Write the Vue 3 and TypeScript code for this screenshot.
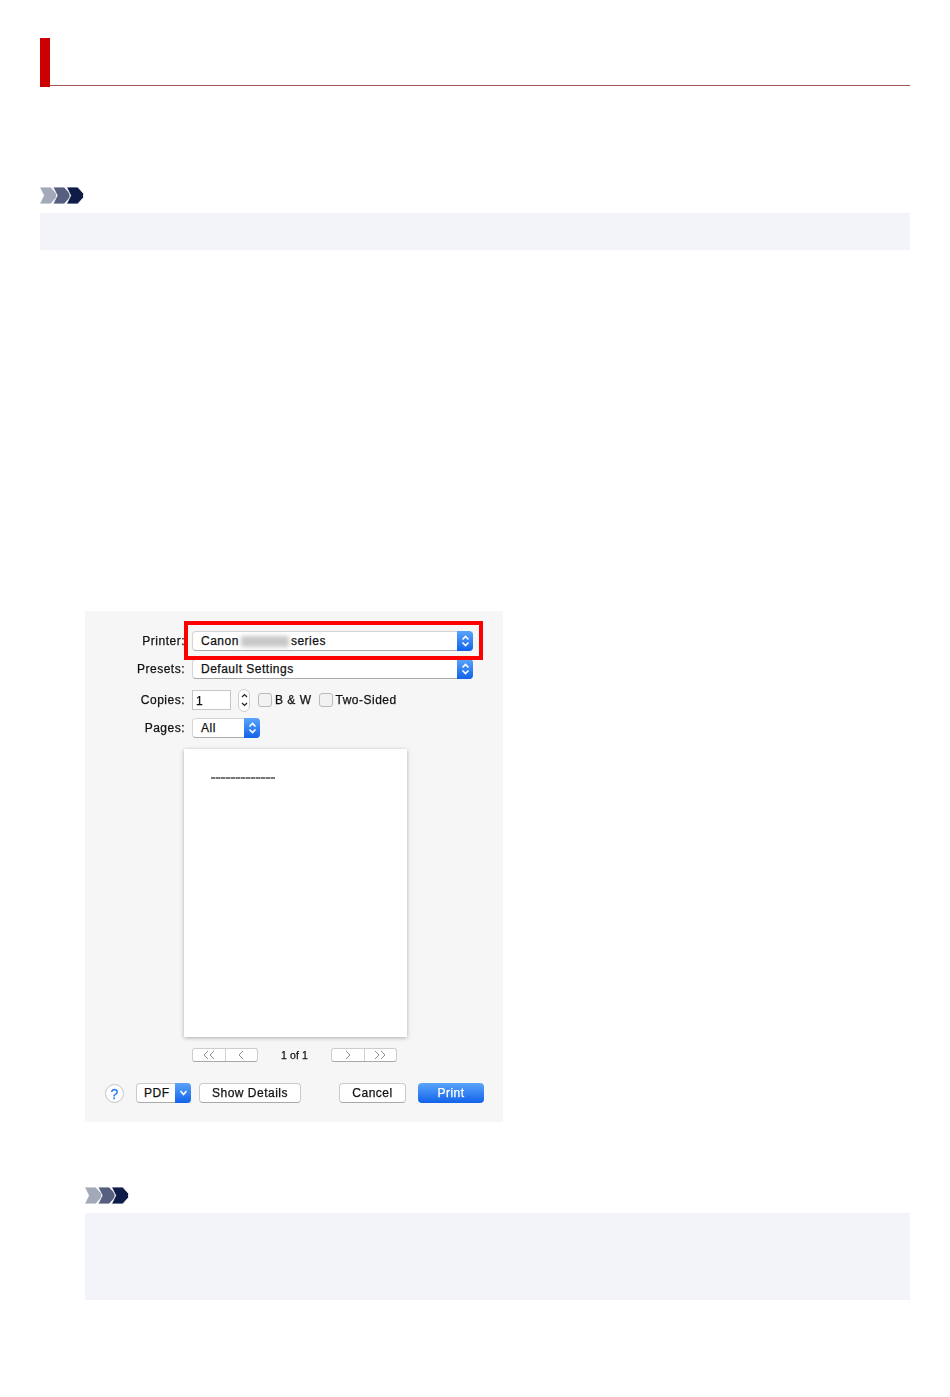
<script setup lang="ts">
const chevrons = ['#a3a9b8', '#565f7f', '#0f1c47']
const chevronPath = (i: number): string =>
  `M${i * 13.5 - 0.5} 0h11.2l5.8 6.4v4.2l-5.8 6.4h-11.2l4.2 -8.5z`
</script>

<template>
  <div class="page">
    <header class="head">
      <div class="head-mark"></div>
      <div class="head-line"></div>
    </header>

    <section class="note note-top">
      <svg class="note-icon" width="44" height="17" viewBox="0 0 44 17">
        <path v-for="(c, i) in chevrons" :key="c" :fill="c" stroke="#fff" stroke-width="0.8" :d="chevronPath(i)" />
      </svg>
      <div class="note-box short"></div>
    </section>

    <section class="dialog">
      <div class="dialog-inner">
        <div class="row row-printer">
          <span class="label">Printer:</span>
          <div class="select wide">
            <span class="value">Canon<i class="blur"></i>series</span>
            <span class="stepper"><svg width="9" height="14" viewBox="0 0 9 14"><path d="M1.5 5.5 4.5 2.5 7.5 5.5M1.5 8.5 4.5 11.5 7.5 8.5" /></svg></span>
          </div>
        </div>
        <div class="row row-presets">
          <span class="label">Presets:</span>
          <div class="select wide">
            <span class="value">Default Settings</span>
            <span class="stepper"><svg width="9" height="14" viewBox="0 0 9 14"><path d="M1.5 5.5 4.5 2.5 7.5 5.5M1.5 8.5 4.5 11.5 7.5 8.5" /></svg></span>
          </div>
        </div>
        <div class="row row-copies">
          <span class="label">Copies:</span>
          <div class="input">1</div>
          <div class="spin"><svg width="9" height="18" viewBox="0 0 9 18"><path d="M2 6 4.5 3.5 7 6M2 12 4.5 14.5 7 12" /></svg></div>
          <span class="check"></span><span class="check-text">B &amp; W</span>
          <span class="check second"></span><span class="check-text">Two-Sided</span>
        </div>
        <div class="row row-pages">
          <span class="label">Pages:</span>
          <div class="select narrow">
            <span class="value">All</span>
            <span class="stepper"><svg width="9" height="14" viewBox="0 0 9 14"><path d="M1.5 5.5 4.5 2.5 7.5 5.5M1.5 8.5 4.5 11.5 7.5 8.5" /></svg></span>
          </div>
        </div>

        <div class="paper"><div class="paper-line"></div></div>

        <div class="pager">
          <div class="seg">
            <span class="seg-cell first"><svg width="14" height="10" viewBox="0 0 14 10"><path d="M6 1 2 5 6 9M12 1 8 5 12 9" /></svg></span>
            <span class="seg-cell"><svg width="8" height="10" viewBox="0 0 8 10"><path d="M6 1 2 5 6 9" /></svg></span>
          </div>
          <span class="pager-text">1 of 1</span>
          <div class="seg">
            <span class="seg-cell first"><svg width="8" height="10" viewBox="0 0 8 10"><path d="M2 1 6 5 2 9" /></svg></span>
            <span class="seg-cell"><svg width="14" height="10" viewBox="0 0 14 10"><path d="M2 1 6 5 2 9M8 1 12 5 8 9" /></svg></span>
          </div>
        </div>

        <div class="actions">
          <span class="help">?</span>
          <div class="btn pdf">
            <span class="pdf-text">PDF</span>
            <span class="pdf-drop"><svg width="9" height="8" viewBox="0 0 9 8"><path d="M1.5 2 4.5 5.5 7.5 2" /></svg></span>
          </div>
          <div class="btn details">Show Details</div>
          <div class="btn cancel">Cancel</div>
          <div class="btn print">Print</div>
        </div>
      </div>
      <div class="highlight"></div>
    </section>

    <section class="note note-bottom">
      <svg class="note-icon" width="44" height="17" viewBox="0 0 44 17">
        <path v-for="(c, i) in chevrons" :key="c" :fill="c" stroke="#fff" stroke-width="0.8" :d="chevronPath(i)" />
      </svg>
      <div class="note-box tall"></div>
    </section>
  </div>
</template>

<style>
html, body { background: #fff; }
</style>

<style scoped>
.page {
  box-sizing: border-box;
  width: 950px;
  height: 1397px;
  padding: 38px 40px 0;
  font-family: "Liberation Sans", Arial, sans-serif;
  overflow: hidden;
}
.head { display: flex; align-items: flex-start; height: 49px; }
.head-mark { width: 10px; height: 49px; background: #cc0000; }
.head-line { flex: 1; height: 48px; box-sizing: border-box; border-bottom: 1px solid #a05a5a; }

.note-icon { display: block; overflow: hidden; }
.note-top { margin-top: 100px; }
.note-box { margin-top: 9px; background: #f3f4f9; }
.short { height: 37px; }
.tall { height: 87px; }
.note-bottom { margin: 65px 0 0 45px; }

.dialog {
  position: relative;
  box-sizing: border-box;
  width: 418px;
  height: 511px;
  margin: 361px 0 0 45px;
  background: #f6f6f6;
}
.dialog-inner {
  box-sizing: border-box;
  height: 100%;
  padding-top: 20px;
  font-size: 12px;
  letter-spacing: 0.5px;
  color: #111;
  -webkit-text-stroke: 0.25px #111;
  filter: blur(0.5px);
}
.row { display: flex; align-items: center; height: 20px; }
.row-presets { margin-top: 8px; }
.row-copies { margin-top: 11px; }
.row-pages { margin-top: 8px; }
.label { width: 100px; text-align: right; margin-right: 7px; }

.select {
  box-sizing: border-box;
  position: relative;
  display: flex;
  align-items: center;
  height: 20px;
  padding-left: 8px;
  background: #fff;
  border: 1px solid #d4d4d4;
  border-bottom-color: #ababab;
  border-radius: 4px;
}
.wide { width: 281px; }
.narrow { width: 68px; }
.value { display: flex; align-items: center; }
.blur {
  display: inline-block;
  width: 48px;
  height: 11px;
  margin: 0 2px 0 2px;
  background: #c8c8c8;
  filter: blur(2px);
}
.stepper {
  position: absolute;
  top: -1px;
  right: -1px;
  bottom: -1px;
  width: 16px;
  display: flex;
  align-items: center;
  justify-content: center;
  background: linear-gradient(#5aa5fb, #1262ea);
  border-radius: 0 4px 4px 0;
}
.stepper svg path, .pdf-drop svg path {
  fill: none;
  stroke: #fff;
  stroke-width: 1.6;
}

.input {
  box-sizing: border-box;
  width: 39px;
  height: 20px;
  padding: 2px 0 0 3px;
  background: #fff;
  border: 1px solid #c6c6c6;
  line-height: 16px;
}
.spin {
  box-sizing: border-box;
  display: flex;
  align-items: center;
  justify-content: center;
  width: 12px;
  height: 23px;
  margin-left: 7px;
  background: #fff;
  border: 1px solid #cfcfcf;
  border-radius: 6px;
}
.spin svg path { fill: none; stroke: #222; stroke-width: 1.2; }
.check {
  box-sizing: border-box;
  width: 14px;
  height: 14px;
  margin-left: 8px;
  background: #f2f2f2;
  border: 1px solid #b9b9b9;
  border-radius: 3px;
}
.check.second { margin-left: 7px; }
.check-text { margin-left: 3px; white-space: nowrap; }

.paper {
  box-sizing: border-box;
  width: 223px;
  height: 288px;
  margin: 11px 0 0 99px;
  padding: 28px 0 0 27px;
  background: #fff;
  box-shadow: 0 1px 4px rgba(0, 0, 0, 0.3);
}
.paper-line {
  width: 64px;
  height: 2px;
  background: repeating-linear-gradient(90deg, #777 0 4px, #bbb 4px 5px);
}

.pager {
  display: flex;
  align-items: center;
  height: 14px;
  margin: 11px 0 0 107px;
}
.seg {
  box-sizing: border-box;
  display: flex;
  width: 66px;
  height: 14px;
  background: #fff;
  border: 1px solid #cdcdcd;
  border-bottom-color: #a9a9a9;
  border-radius: 3px;
}
.seg-cell { flex: 1; display: flex; align-items: center; justify-content: center; }
.seg-cell.first { border-right: 1px solid #d0d0d0; }
.seg-cell svg path { fill: none; stroke: #8f8f8f; stroke-width: 1; }
.pager-text { width: 73px; text-align: center; font-size: 10.5px; letter-spacing: 0.1px; }

.actions { display: flex; align-items: center; height: 20px; margin: 21px 0 0 20px; }
.help {
  box-sizing: border-box;
  width: 19px;
  height: 19px;
  border-radius: 50%;
  background: #fff;
  border: 1px solid #c4c4c4;
  color: #2a7bf0;
  -webkit-text-stroke: 0.3px #2a7bf0;
  text-align: center;
  line-height: 18px;
  font-size: 14px;
  letter-spacing: 0;
}
.btn {
  box-sizing: border-box;
  height: 20px;
  line-height: 18px;
  background: #fff;
  border: 1px solid #cbcbcb;
  border-bottom-color: #a9a9a9;
  border-radius: 4px;
  text-align: center;
}
.pdf {
  position: relative;
  width: 55px;
  margin-left: 12px;
  text-align: left;
  padding-left: 7px;
}
.pdf-drop {
  position: absolute;
  top: -1px;
  right: -1px;
  bottom: -1px;
  width: 16px;
  display: flex;
  align-items: center;
  justify-content: center;
  background: linear-gradient(#5aa5fb, #1262ea);
  border-radius: 0 4px 4px 0;
}
.details { width: 102px; margin-left: 8px; }
.cancel { width: 67px; margin-left: 38px; }
.print {
  width: 66px;
  margin-left: 12px;
  color: #fff;
  -webkit-text-stroke: 0.25px #fff;
  border: none;
  line-height: 20px;
  background: linear-gradient(#5aa5fb, #1262ea);
}

.highlight {
  position: absolute;
  left: 99px;
  top: 10px;
  width: 299px;
  height: 39px;
  box-sizing: border-box;
  border: 4px solid #ff0000;
}
</style>
